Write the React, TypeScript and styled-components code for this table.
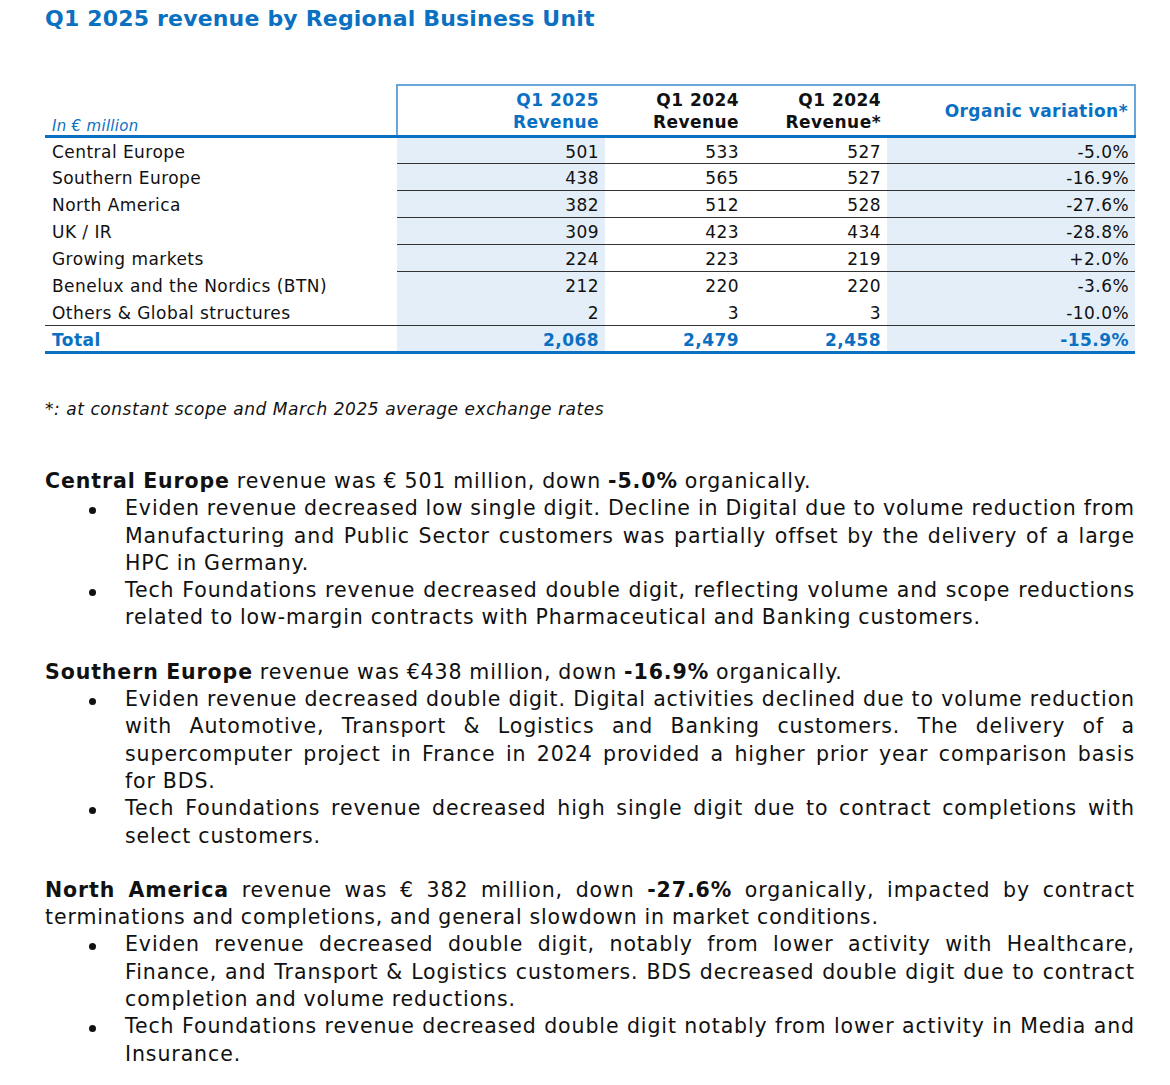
import styled, { createGlobalStyle } from "styled-components";

const GlobalStyle = createGlobalStyle`
  body {
    margin: 0;
    background: #ffffff;
    font-family: "DejaVu Sans", Verdana, sans-serif;
    color: #111111;
  }
`;

const BLUE = "#0a70c2";

const Page = styled.div`
  width: 1090px;
  padding: 5px 0 0 45px;
`;

const Title = styled.h1`
  margin: 0;
  font-size: 22px;
  letter-spacing: 0.18px;
  line-height: 28px;
  font-weight: bold;
  color: ${BLUE};
`;

const Table = styled.table`
  margin-top: 51px;
  width: 1090px;
  border-collapse: collapse;
  font-size: 17px;
  letter-spacing: 0.45px;
  table-layout: fixed;
`;

const HeadCell = styled.th<{ blue?: boolean; first?: boolean; last?: boolean }>`
  height: 49px;
  padding: 0 6px 0 0;
  text-align: right;
  vertical-align: middle;
  font-weight: bold;
  line-height: 22px;
  color: ${(p) => (p.blue ? BLUE : "#111")};
  border-top: 2px solid #6aa6da;
  border-left: ${(p) => (p.first ? "2px solid #6aa6da" : "none")};
  border-right: ${(p) => (p.last ? "2px solid #6aa6da" : "none")};
  border-bottom: 3px solid ${BLUE};
`;

const UnitCell = styled.th`
  padding: 0 0 0 7px;
  text-align: left;
  vertical-align: bottom;
  font-weight: normal;
  font-style: italic;
  font-size: 15px;
  letter-spacing: 0.3px;
  color: ${BLUE};
  border-bottom: 3px solid ${BLUE};
`;

const Row = styled.tr<{ total?: boolean }>`
  height: 27px;
  ${(p) =>
    p.total
      ? `border-top: 1.5px solid #333; border-bottom: 3px solid ${BLUE};`
      : ""}
`;

const Label = styled.td<{ total?: boolean }>`
  padding: 2px 0 0 7px;
  white-space: nowrap;
  font-weight: ${(p) => (p.total ? "bold" : "normal")};
  color: ${(p) => (p.total ? BLUE : "#111")};
`;

const Num = styled.td<{ shaded?: boolean; total?: boolean; line?: boolean }>`
  padding: 2px 6px 0 0;
  text-align: right;
  background: ${(p) => (p.shaded ? "#e3eef8" : "transparent")};
  font-weight: ${(p) => (p.total ? "bold" : "normal")};
  color: ${(p) => (p.total ? BLUE : "#111")};
  border-bottom: ${(p) => (p.line ? "1px solid #333" : "none")};
`;

const Footnote = styled.p`
  margin: 44px 0 0 0;
  font-size: 17px;
  letter-spacing: 0.55px;
  font-style: italic;
  line-height: 22px;
`;

const Section = styled.div`
  margin-top: 27px;
  font-size: 20.5px;
  letter-spacing: 0.9px;
  word-spacing: -0.5px;
  line-height: 27.3px;
  text-align: justify;
  &:first-of-type {
    margin-top: 48px;
  }
`;

const Lead = styled.p`
  margin: 0;
`;

const Bullets = styled.ul`
  margin: 0;
  padding: 0 0 0 80px;
  list-style: none;
`;

const Bullet = styled.li`
  position: relative;
  &::before {
    content: "";
    position: absolute;
    left: -36px;
    top: 12px;
    width: 7px;
    height: 7px;
    border-radius: 50%;
    background: #111;
  }
`;

const NoWrap = styled.span`
  white-space: nowrap;
`;

const rows = [
  ["Central Europe", "501", "533", "527", "-5.0%"],
  ["Southern Europe", "438", "565", "527", "-16.9%"],
  ["North America", "382", "512", "528", "-27.6%"],
  ["UK / IR", "309", "423", "434", "-28.8%"],
  ["Growing markets", "224", "223", "219", "+2.0%"],
  ["Benelux and the Nordics (BTN)", "212", "220", "220", "-3.6%"],
  ["Others & Global structures", "2", "3", "3", "-10.0%"],
];

export default function App() {
  return (
    <>
      <GlobalStyle />
      <Page>
        <Title>Q1 2025 revenue by Regional Business Unit</Title>
        <Table>
          <colgroup>
            <col style={{ width: 352 }} />
            <col style={{ width: 208 }} />
            <col style={{ width: 140 }} />
            <col style={{ width: 142 }} />
            <col style={{ width: 248 }} />
          </colgroup>
          <thead>
            <tr>
              <UnitCell>In € million</UnitCell>
              <HeadCell blue first>
                Q1 2025
                <br />
                Revenue
              </HeadCell>
              <HeadCell>
                Q1 2024
                <br />
                Revenue
              </HeadCell>
              <HeadCell>
                Q1 2024
                <br />
                Revenue*
              </HeadCell>
              <HeadCell blue last>
                Organic variation*
              </HeadCell>
            </tr>
          </thead>
          <tbody>
            {rows.map((r, i) => {
              const line = i < rows.length - 2;
              return (
                <Row key={r[0]}>
                  <Label>{r[0]}</Label>
                  <Num shaded line={line}>{r[1]}</Num>
                  <Num line={line}>{r[2]}</Num>
                  <Num line={line}>{r[3]}</Num>
                  <Num shaded line={line}>{r[4]}</Num>
                </Row>
              );
            })}
            <Row total>
              <Label total>Total</Label>
              <Num shaded total>2,068</Num>
              <Num total>2,479</Num>
              <Num total>2,458</Num>
              <Num shaded total>-15.9%</Num>
            </Row>
          </tbody>
        </Table>
        <Footnote>*: at constant scope and March 2025 average exchange rates</Footnote>

        <Section>
          <Lead>
            <b>Central Europe</b> revenue was € 501 million, down <b>-5.0%</b> organically.
          </Lead>
          <Bullets>
            <Bullet>
              Eviden revenue decreased low single digit. Decline in Digital due to volume reduction from
              Manufacturing and Public Sector customers was partially offset by the delivery of a large
              HPC in Germany.
            </Bullet>
            <Bullet>
              Tech Foundations revenue decreased double digit, reflecting volume and scope reductions
              related to low-margin contracts with Pharmaceutical and Banking customers.
            </Bullet>
          </Bullets>
        </Section>

        <Section>
          <Lead>
            <b>Southern Europe</b> revenue was €438 million, down <b>-16.9%</b> organically.
          </Lead>
          <Bullets>
            <Bullet>
              Eviden revenue decreased double digit. Digital activities declined due to volume reduction
              with Automotive, Transport &amp; Logistics and Banking customers. The delivery of a
              supercomputer project in France in 2024 provided a higher prior year comparison basis{" "}
              <NoWrap>for BDS.</NoWrap>
            </Bullet>
            <Bullet>
              Tech Foundations revenue decreased high single digit due to contract completions with
              select customers.
            </Bullet>
          </Bullets>
        </Section>

        <Section>
          <Lead>
            <b>North America</b> revenue was € 382 million, down <b>-27.6%</b> organically, impacted by
            contract terminations and completions, and general slowdown in market conditions.
          </Lead>
          <Bullets>
            <Bullet>
              Eviden revenue decreased double digit, notably from lower activity with Healthcare,
              Finance, and Transport &amp; Logistics customers. BDS decreased double digit due to contract
              completion and volume reductions.
            </Bullet>
            <Bullet>
              Tech Foundations revenue decreased double digit notably from lower activity in Media and
              Insurance.
            </Bullet>
          </Bullets>
        </Section>
      </Page>
    </>
  );
}
